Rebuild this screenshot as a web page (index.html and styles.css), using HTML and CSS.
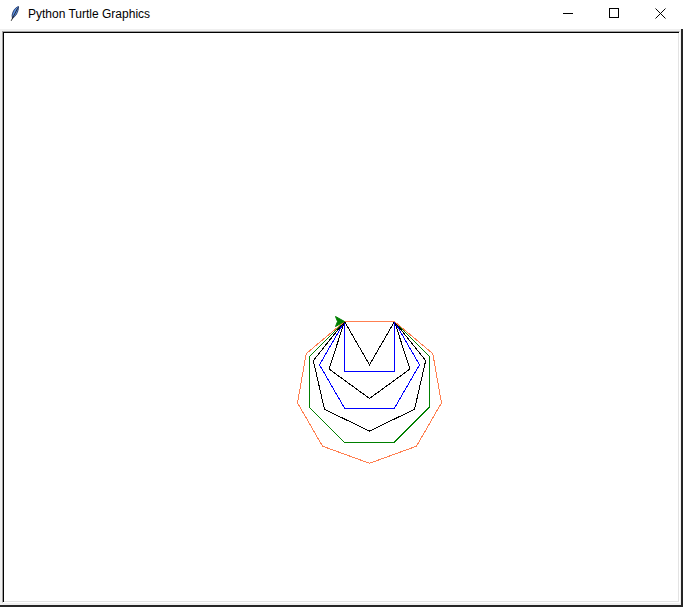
FILE: index.html
```html
<!DOCTYPE html>
<html>
<head>
<meta charset="utf-8">
<title>Python Turtle Graphics</title>
<link rel="stylesheet" href="styles.css">
</head>
<body>
<div class="window">
  <div class="titlebar">
    <svg class="app-icon" width="9" height="16" viewBox="0 0 9 16">
      <path d="M8.6 0.6 C5.6 1.2 2.8 4.6 2.1 9.6 L2.5 12.4 C5.6 10.2 8.2 6.6 8.6 0.6 Z" fill="#5d92e4" stroke="#1c2f5c" stroke-width="0.9"/>
      <path d="M7.6 2.2 L1.2 14.8" stroke="#1b1b1b" stroke-width="0.9" fill="none"/>
    </svg>
    <span class="title">Python Turtle Graphics</span>
    <div class="controls">
      <div class="ctl">
        <svg width="10" height="10" viewBox="0 0 10 10"><path d="M0 5.5 H10" stroke="#000" stroke-width="1"/></svg>
      </div>
      <div class="ctl">
        <svg width="10" height="10" viewBox="0 0 10 10"><rect x="0.5" y="0.5" width="9" height="9" fill="none" stroke="#000" stroke-width="1"/></svg>
      </div>
      <div class="ctl">
        <svg width="11" height="11" viewBox="0 0 11 11"><path d="M0.5 0.5 L10.5 10.5 M10.5 0.5 L0.5 10.5" stroke="#000" stroke-width="1"/></svg>
      </div>
    </div>
  </div>
  <div class="client">
    <div class="canvas">
      <svg class="drawing" viewBox="3 32 676 570" shape-rendering="crispEdges">
        <polygon class="pen-black" points="344.5,321.5 394.5,321.5 369.5,364.8"/>
        <polygon class="pen-blue" points="344.5,321.5 394.5,321.5 394.5,371.5 344.5,371.5"/>
        <polygon class="pen-black" points="344.5,321.5 394.5,321.5 409.95,369.05 369.5,398.44 329.05,369.05"/>
        <polygon class="pen-blue" points="344.5,321.5 394.5,321.5 419.5,364.8 394.5,408.1 344.5,408.1 319.5,364.8"/>
        <polygon class="pen-black" points="344.5,321.5 394.5,321.5 425.67,360.59 414.55,409.34 369.5,431.03 324.45,409.34 313.33,360.59"/>
        <polygon class="pen-green" points="344.5,321.5 394.5,321.5 429.86,356.86 429.86,406.86 394.5,442.21 344.5,442.21 309.14,406.86 309.14,356.86"/>
        <polygon class="pen-coral" points="344.5,321.5 394.5,321.5 432.8,353.64 441.48,402.88 416.48,446.18 369.5,463.28 322.52,446.18 297.52,402.88 306.2,353.64"/>
        <polygon class="turtle" points="344.5,321.5 335.5,316.5 337.5,321.5 335.5,326.5" shape-rendering="auto"/>
      </svg>
    </div>
  </div>
</div>
</body>
</html>
```

FILE: styles.css
```css
* { box-sizing: border-box; }
html, body { margin: 0; padding: 0; }
body {
  width: 683px;
  height: 607px;
  overflow: hidden;
  background: #ffffff;
  font-family: "Liberation Sans", Arial, sans-serif;
}
.window {
  width: 683px;
  height: 607px;
  display: flex;
  flex-direction: column;
}
.titlebar {
  height: 29px;
  flex: 0 0 29px;
  background: #ffffff;
  display: flex;
  align-items: center;
}
.app-icon {
  margin-left: 10px;
  margin-top: -2px;
  flex: 0 0 auto;
}
.title {
  margin-left: 9px;
  font-size: 12px;
  color: #000000;
  margin-top: -1px;
}
.controls {
  margin-left: auto;
  display: flex;
  height: 100%;
}
.ctl {
  width: 46px;
  height: 100%;
  display: flex;
  align-items: center;
  justify-content: center;
  padding-bottom: 3px;
}
.client {
  flex: 1 1 auto;
  background: #f0f0f0;
  padding: 2px 1px 2px 2px;
  border-right: 2px solid #262626;
  border-bottom: 2px solid #262626;
  display: flex;
}
.canvas {
  flex: 1 1 auto;
  position: relative;
  background: #ffffff;
  border-style: solid;
  border-width: 1px;
  border-color: #a0a0a0 #ffffff #ffffff #a0a0a0;
  box-shadow: inset 1px 1px 0 #000000, inset -1px -1px 0 #e3e3e3;
  overflow: hidden;
}
.drawing {
  position: absolute;
  left: 0;
  top: 0;
  width: 676px;
  height: 570px;
}
.drawing polygon { fill: none; stroke-width: 1; }
.pen-black { stroke: #000000; }
.pen-blue { stroke: #0000ff; }
.pen-green { stroke: #008000; }
.pen-coral { stroke: #ff7f50; }
.drawing .turtle { fill: #008000; stroke: #008000; stroke-width: 1; }
```
